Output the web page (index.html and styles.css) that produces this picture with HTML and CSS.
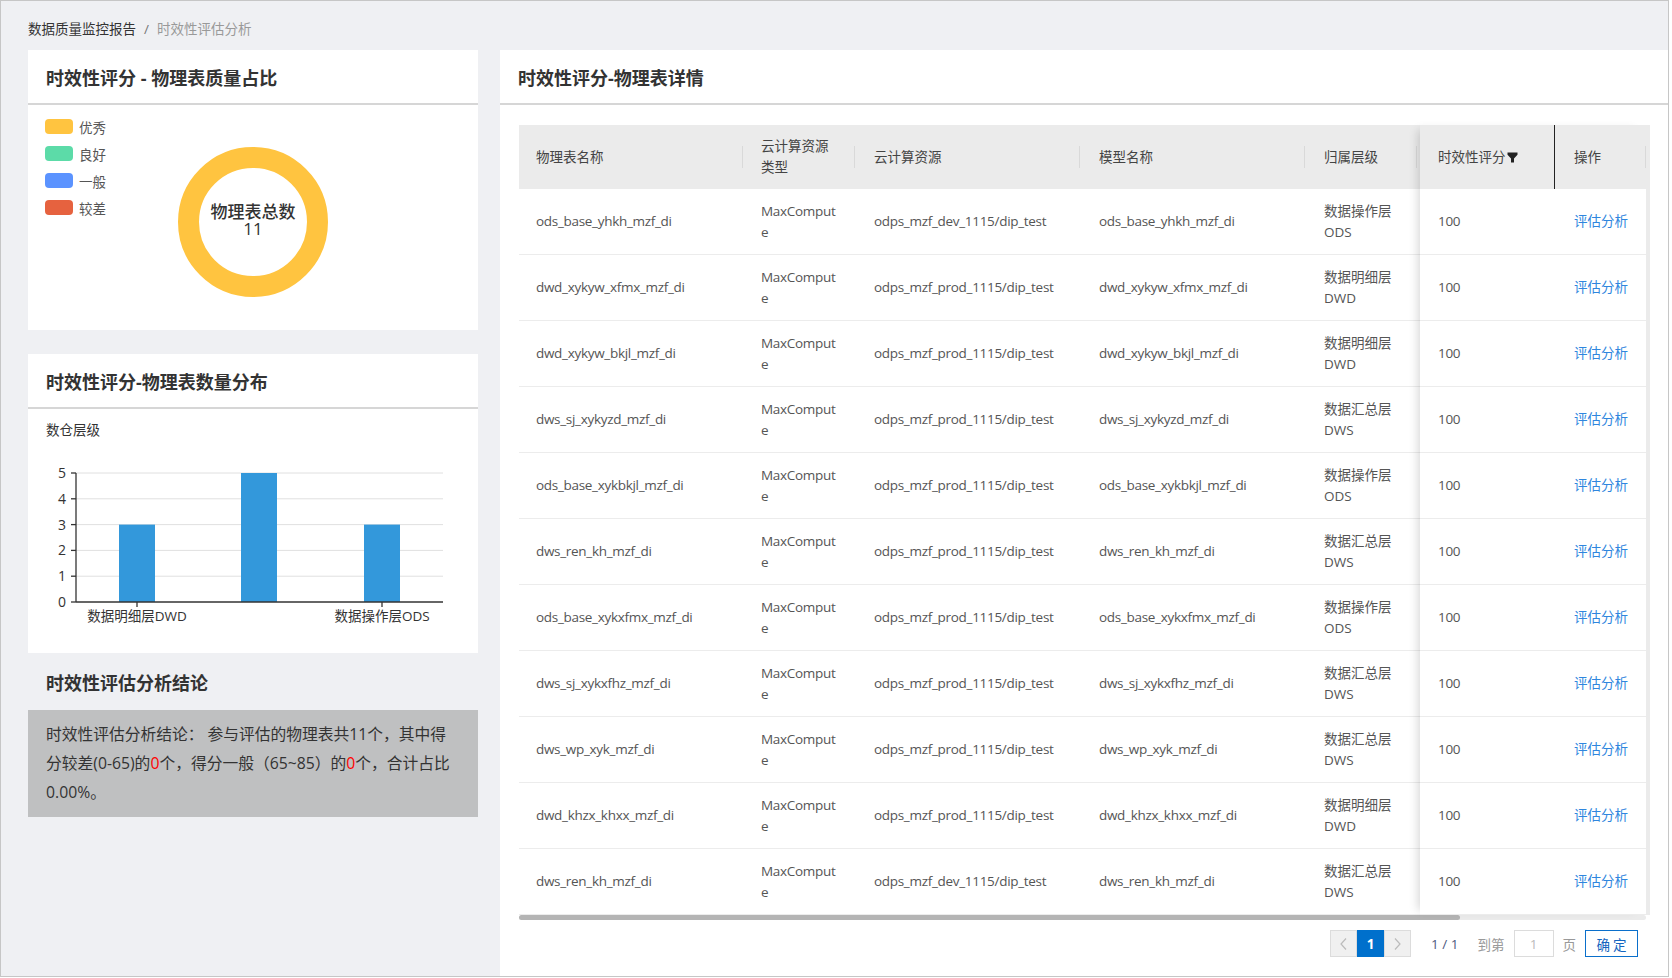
FILE: index.html
```html
<!DOCTYPE html>
<html lang="zh-CN">
<head>
<meta charset="utf-8">
<title>时效性评估分析</title>
<link rel="stylesheet" href="styles.css">
</head>
<body>
<div class="page">
  <div class="breadcrumb">
    <span class="bc-root">数据质量监控报告</span><span class="bc-sep">/</span><span class="bc-current">时效性评估分析</span>
  </div>
  <div class="layout">
    <div class="left-col">
      <section class="card card-quality">
        <div class="card-header">时效性评分 - 物理表质量占比</div>
        <div class="quality-body">
          <ul class="legend">
            <li class="legend-item"><span class="swatch sw-yellow"></span>优秀</li>
            <li class="legend-item"><span class="swatch sw-green"></span>良好</li>
            <li class="legend-item"><span class="swatch sw-blue"></span>一般</li>
            <li class="legend-item"><span class="swatch sw-red"></span>较差</li>
          </ul>
          <svg class="donut" width="150" height="150" viewBox="0 0 150 150">
            <circle cx="75" cy="75" r="64.5" fill="none" stroke="#ffc440" stroke-width="21"/>
            <text class="donut-label" x="75" y="71" text-anchor="middle">物理表总数</text>
            <text class="donut-label" x="75" y="88" text-anchor="middle">11</text>
          </svg>
        </div>
      </section>

      <section class="card card-dist">
        <div class="card-header">时效性评分-物理表数量分布</div>
        <div class="dist-body">
          <div class="axis-name">数仓层级</div>
          <svg class="bar-chart" width="450" height="200" viewBox="0 0 450 200">
            <g class="grid">
              <line x1="48" y1="34" x2="415" y2="34"/>
              <line x1="48" y1="59.8" x2="415" y2="59.8"/>
              <line x1="48" y1="85.6" x2="415" y2="85.6"/>
              <line x1="48" y1="111.4" x2="415" y2="111.4"/>
              <line x1="48" y1="137.2" x2="415" y2="137.2"/>
            </g>
            <g class="bars">
              <rect x="91" y="85.6" width="36" height="77.4"/>
              <rect x="213" y="34" width="36" height="129"/>
              <rect x="336" y="85.6" width="36" height="77.4"/>
            </g>
            <g class="axis">
              <line x1="48" y1="34" x2="48" y2="163"/>
              <line x1="48" y1="163" x2="415" y2="163"/>
              <line x1="43" y1="34" x2="48" y2="34"/>
              <line x1="43" y1="59.8" x2="48" y2="59.8"/>
              <line x1="43" y1="85.6" x2="48" y2="85.6"/>
              <line x1="43" y1="111.4" x2="48" y2="111.4"/>
              <line x1="43" y1="137.2" x2="48" y2="137.2"/>
              <line x1="43" y1="163" x2="48" y2="163"/>
              <line x1="109" y1="163" x2="109" y2="168"/>
              <line x1="354" y1="163" x2="354" y2="168"/>
            </g>
            <g class="ylabels">
              <text x="38" y="39">5</text>
              <text x="38" y="64.8">4</text>
              <text x="38" y="90.6">3</text>
              <text x="38" y="116.4">2</text>
              <text x="38" y="142.2">1</text>
              <text x="38" y="168">0</text>
            </g>
            <g class="xlabels">
              <text x="109" y="182">数据明细层DWD</text>
              <text x="354" y="182">数据操作层ODS</text>
            </g>
          </svg>
        </div>
      </section>

      <h3 class="conclusion-title">时效性评估分析结论</h3>
      <div class="conclusion-box">时效性评估分析结论： 参与评估的物理表共11个，其中得分较差(0-65)的<span class="red">0</span>个，得分一般（65~85）的<span class="red">0</span>个，合计占比0.00%。</div>
    </div>

    <section class="card card-detail">
      <div class="card-header">时效性评分-物理表详情</div>
      <div class="detail-body">
        <div class="table-main">
          <div class="scroll-part">
            <div class="scroll-inner">
              <div class="trow thead">
                <div class="cell c1 hd">物理表名称</div>
                <div class="cell c2 hd">云计算资源类型</div>
                <div class="cell c3 hd">云计算资源</div>
                <div class="cell c4 hd">模型名称</div>
                <div class="cell c5 hd">归属层级</div>
                <div class="cell c-ph"></div>
              </div>
              <div class="trow"><div class="cell c1">ods_base_yhkh_mzf_di</div><div class="cell c2">MaxCompute</div><div class="cell c3">odps_mzf_dev_1115/dip_test</div><div class="cell c4">ods_base_yhkh_mzf_di</div><div class="cell c5">数据操作层ODS</div><div class="cell c-ph"></div></div>
              <div class="trow"><div class="cell c1">dwd_xykyw_xfmx_mzf_di</div><div class="cell c2">MaxCompute</div><div class="cell c3">odps_mzf_prod_1115/dip_test</div><div class="cell c4">dwd_xykyw_xfmx_mzf_di</div><div class="cell c5">数据明细层DWD</div><div class="cell c-ph"></div></div>
              <div class="trow"><div class="cell c1">dwd_xykyw_bkjl_mzf_di</div><div class="cell c2">MaxCompute</div><div class="cell c3">odps_mzf_prod_1115/dip_test</div><div class="cell c4">dwd_xykyw_bkjl_mzf_di</div><div class="cell c5">数据明细层DWD</div><div class="cell c-ph"></div></div>
              <div class="trow"><div class="cell c1">dws_sj_xykyzd_mzf_di</div><div class="cell c2">MaxCompute</div><div class="cell c3">odps_mzf_prod_1115/dip_test</div><div class="cell c4">dws_sj_xykyzd_mzf_di</div><div class="cell c5">数据汇总层DWS</div><div class="cell c-ph"></div></div>
              <div class="trow"><div class="cell c1">ods_base_xykbkjl_mzf_di</div><div class="cell c2">MaxCompute</div><div class="cell c3">odps_mzf_prod_1115/dip_test</div><div class="cell c4">ods_base_xykbkjl_mzf_di</div><div class="cell c5">数据操作层ODS</div><div class="cell c-ph"></div></div>
              <div class="trow"><div class="cell c1">dws_ren_kh_mzf_di</div><div class="cell c2">MaxCompute</div><div class="cell c3">odps_mzf_prod_1115/dip_test</div><div class="cell c4">dws_ren_kh_mzf_di</div><div class="cell c5">数据汇总层DWS</div><div class="cell c-ph"></div></div>
              <div class="trow"><div class="cell c1">ods_base_xykxfmx_mzf_di</div><div class="cell c2">MaxCompute</div><div class="cell c3">odps_mzf_prod_1115/dip_test</div><div class="cell c4">ods_base_xykxfmx_mzf_di</div><div class="cell c5">数据操作层ODS</div><div class="cell c-ph"></div></div>
              <div class="trow"><div class="cell c1">dws_sj_xykxfhz_mzf_di</div><div class="cell c2">MaxCompute</div><div class="cell c3">odps_mzf_prod_1115/dip_test</div><div class="cell c4">dws_sj_xykxfhz_mzf_di</div><div class="cell c5">数据汇总层DWS</div><div class="cell c-ph"></div></div>
              <div class="trow"><div class="cell c1">dws_wp_xyk_mzf_di</div><div class="cell c2">MaxCompute</div><div class="cell c3">odps_mzf_prod_1115/dip_test</div><div class="cell c4">dws_wp_xyk_mzf_di</div><div class="cell c5">数据汇总层DWS</div><div class="cell c-ph"></div></div>
              <div class="trow"><div class="cell c1">dwd_khzx_khxx_mzf_di</div><div class="cell c2">MaxCompute</div><div class="cell c3">odps_mzf_prod_1115/dip_test</div><div class="cell c4">dwd_khzx_khxx_mzf_di</div><div class="cell c5">数据明细层DWD</div><div class="cell c-ph"></div></div>
              <div class="trow"><div class="cell c1">dws_ren_kh_mzf_di</div><div class="cell c2">MaxCompute</div><div class="cell c3">odps_mzf_dev_1115/dip_test</div><div class="cell c4">dws_ren_kh_mzf_di</div><div class="cell c5">数据汇总层DWS</div><div class="cell c-ph"></div></div>
            </div>
          </div>
          <div class="fixed-part">
            <div class="trow thead">
              <div class="cell c6 hd hd-score">时效性评分<svg class="filter-icon" width="11" height="11" viewBox="0 0 11 11"><path d="M0.5 0.5H10.5V2.8L7 6.6V10.5H4V6.6L0.5 2.8Z"/></svg></div>
              <div class="cell c7 hd">操作</div>
            </div>
            <div class="trow"><div class="cell c6">100</div><div class="cell c7"><a class="link">评估分析</a></div></div>
            <div class="trow"><div class="cell c6">100</div><div class="cell c7"><a class="link">评估分析</a></div></div>
            <div class="trow"><div class="cell c6">100</div><div class="cell c7"><a class="link">评估分析</a></div></div>
            <div class="trow"><div class="cell c6">100</div><div class="cell c7"><a class="link">评估分析</a></div></div>
            <div class="trow"><div class="cell c6">100</div><div class="cell c7"><a class="link">评估分析</a></div></div>
            <div class="trow"><div class="cell c6">100</div><div class="cell c7"><a class="link">评估分析</a></div></div>
            <div class="trow"><div class="cell c6">100</div><div class="cell c7"><a class="link">评估分析</a></div></div>
            <div class="trow"><div class="cell c6">100</div><div class="cell c7"><a class="link">评估分析</a></div></div>
            <div class="trow"><div class="cell c6">100</div><div class="cell c7"><a class="link">评估分析</a></div></div>
            <div class="trow"><div class="cell c6">100</div><div class="cell c7"><a class="link">评估分析</a></div></div>
            <div class="trow"><div class="cell c6">100</div><div class="cell c7"><a class="link">评估分析</a></div></div>
          </div>
          <div class="vgutter"></div>
        </div>
        <div class="hscroll"><div class="hthumb"></div></div>
        <div class="pagination">
          <span class="pg-btn pg-disabled"><svg width="7" height="12" viewBox="0 0 7 12"><polyline points="6,0.5 1,6 6,11.5"/></svg></span>
          <span class="pg-btn pg-active">1</span>
          <span class="pg-btn pg-disabled"><svg width="7" height="12" viewBox="0 0 7 12"><polyline points="1,0.5 6,6 1,11.5"/></svg></span>
          <span class="pg-total">1 / 1</span>
          <span class="pg-text pg-goto">到第</span>
          <span class="pg-input">1</span>
          <span class="pg-text pg-page">页</span>
          <span class="pg-confirm">确定</span>
        </div>
      </div>
    </section>
  </div>
</div>
</body>
</html>
```

FILE: styles.css
```css
* { box-sizing: border-box; }

body {
  margin: 0;
  background: #ffffff;
  font-family: "Open Sans", "Noto Sans CJK SC", sans-serif;
  color: #333;
}

.page {
  width: 1669px;
  height: 977px;
  border: 1px solid #c6c6c6;
  background: #eff0f3;
  padding: 0 0 0 27px;
  display: flex;
  flex-direction: column;
  overflow: hidden;
}

/* breadcrumb */
.breadcrumb {
  height: 49px;
  padding-top: 18px;
  font-size: 13.5px;
  line-height: 20px;
  flex: none;
}
.bc-root { color: #333; }
.bc-sep { color: #777; margin: 0 8px 0 8px; }
.bc-current { color: #999; }

.layout {
  flex: 1;
  min-height: 0;
  display: flex;
  gap: 22px;
}

.left-col {
  width: 450px;
  flex: none;
  display: flex;
  flex-direction: column;
}

.card { background: #fff; }

.card-header {
  height: 55px;
  border-bottom: 2px solid #d6d6d6;
  padding: 0 18px;
  display: flex;
  align-items: center;
  font-size: 18px;
  font-weight: 700;
  color: #333;
  flex: none;
}

/* quality card */
.card-quality { height: 280px; }
.quality-body {
  display: flex;
  align-items: flex-start;
  padding: 14px 0 0 17px;
}
.legend {
  list-style: none;
  margin: 0;
  padding: 0;
  width: 61px;
  display: flex;
  flex-direction: column;
  gap: 12px;
}
.legend-item {
  display: flex;
  align-items: center;
  gap: 6px;
  height: 15px;
  font-size: 13.5px;
  color: #555;
  white-space: nowrap;
}
.swatch {
  width: 28px;
  height: 15px;
  border-radius: 4px;
  flex: none;
}
.sw-yellow { background: #ffc440; }
.sw-green { background: #5cdba8; }
.sw-blue { background: #5b93ff; }
.sw-red { background: #e6623f; }

.donut {
  display: block;
  margin: 28px 0 0 72px;
}
.donut-label {
  font-size: 17px;
  font-weight: 500;
  fill: #333;
}

/* distribution card */
.card-dist {
  height: 299px;
  margin-top: 24px;
}
.dist-body { padding-top: 12px; }
.axis-name {
  padding-left: 18px;
  font-size: 13.5px;
  line-height: 18px;
  color: #333;
}
.bar-chart { display: block; }
.bar-chart .grid line { stroke: #e0e0e0; stroke-width: 1; }
.bar-chart .bars rect { fill: #3398db; }
.bar-chart .axis line { stroke: #333; stroke-width: 1.3; }
.bar-chart .ylabels text {
  font-size: 14px;
  fill: #333;
  text-anchor: end;
}
.bar-chart .xlabels text {
  font-size: 13.5px;
  fill: #333;
  text-anchor: middle;
}

/* conclusion */
.conclusion-title {
  margin: 18px 0 0;
  padding-left: 18px;
  font-size: 18px;
  line-height: 24px;
  font-weight: 700;
  color: #333;
}
.conclusion-box {
  margin-top: 15px;
  background: #bfc0c1;
  padding: 10px 18px;
  font-size: 15.75px;
  line-height: 29px;
  color: #333;
}
.red { color: #ff0000; }

/* detail card */
.card-detail {
  flex: 1;
  min-width: 0;
  display: flex;
  flex-direction: column;
}
.detail-body {
  flex: 1;
  padding: 20px 18px 0 19px;
  display: flex;
  flex-direction: column;
}

.table-main {
  display: flex;
  font-size: 13.5px;
  color: #555;
}
.scroll-part {
  flex: 1;
  min-width: 0;
  overflow: hidden;
}
.scroll-inner { width: 1124px; }

.fixed-part {
  width: 226px;
  flex: none;
  position: relative;
  z-index: 1;
  background: #fff;
  box-shadow: -7px 0 9px -5px rgba(0, 0, 0, 0.16);
}
.vgutter {
  width: 4px;
  flex: none;
  background: #ebebeb;
}

.trow {
  display: flex;
  height: 66px;
  border-bottom: 1px solid #ececec;
}
.trow.thead {
  height: 64px;
  border-bottom: none;
  background: #ebebeb;
  color: #444;
}
.cell {
  flex: none;
  display: flex;
  align-items: center;
  line-height: 21px;
  padding: 0 17px 0 19px;
  word-break: break-all;
  letter-spacing: -0.3px;
}
.cell.hd {
  letter-spacing: 0;
  background: linear-gradient(#d9d9d9, #d9d9d9) right center / 1px 22px no-repeat;
}
.c1 { width: 224px; padding-left: 17px; }
.c2 { width: 112px; padding-left: 18px; padding-right: 14px; }
.c3 { width: 225px; }
.c4 { width: 225px; }
.c5 { width: 112px; word-break: normal; letter-spacing: 0; }
.c-ph { width: 226px; }
.c6 { width: 135px; padding-left: 18px; }
.c7 { width: 91px; letter-spacing: 0; }
.cell.hd-score {
  background: none;
  border-right: 1px solid #222;
}
.filter-icon {
  margin-left: 1px;
  flex: none;
}
.filter-icon path { fill: #222; }

.link { color: #2f86de; text-decoration: none; white-space: nowrap; }

.hscroll {
  width: calc(100% - 4px);
  height: 5px;
  background: #ebebeb;
  border-radius: 3px;
}
.hthumb {
  width: 941px;
  height: 5px;
  background: #b4b4b4;
  border-radius: 3px;
}

/* pagination */
.pagination {
  margin-top: 10px;
  padding-right: 12px;
  display: flex;
  justify-content: flex-end;
  align-items: center;
  height: 27px;
  font-size: 13.5px;
}
.pg-btn {
  width: 27px;
  height: 27px;
  display: flex;
  align-items: center;
  justify-content: center;
  border: 1px solid #dcdcdc;
  background: #f0f0f0;
}
.pg-btn polyline { fill: none; stroke: #bbb; stroke-width: 1.2; }
.pg-active {
  background: #0070cc;
  border-color: #0070cc;
  color: #fff;
  font-weight: 700;
}
.pg-total { margin-left: 20px; color: #4e5a80; }
.pg-text { color: #999; }
.pg-goto { margin-left: 19px; }
.pg-input {
  margin-left: 9px;
  width: 40px;
  height: 27px;
  border: 1px solid #dcdcdc;
  display: flex;
  align-items: center;
  justify-content: center;
  color: #bbb;
}
.pg-page { margin-left: 9px; }
.pg-confirm {
  margin-left: 9px;
  width: 53px;
  height: 27px;
  border: 1.5px solid #0a6fcb;
  color: #1565c0;
  display: flex;
  align-items: center;
  justify-content: center;
  letter-spacing: 3px;
  padding-left: 3px;
}
```
